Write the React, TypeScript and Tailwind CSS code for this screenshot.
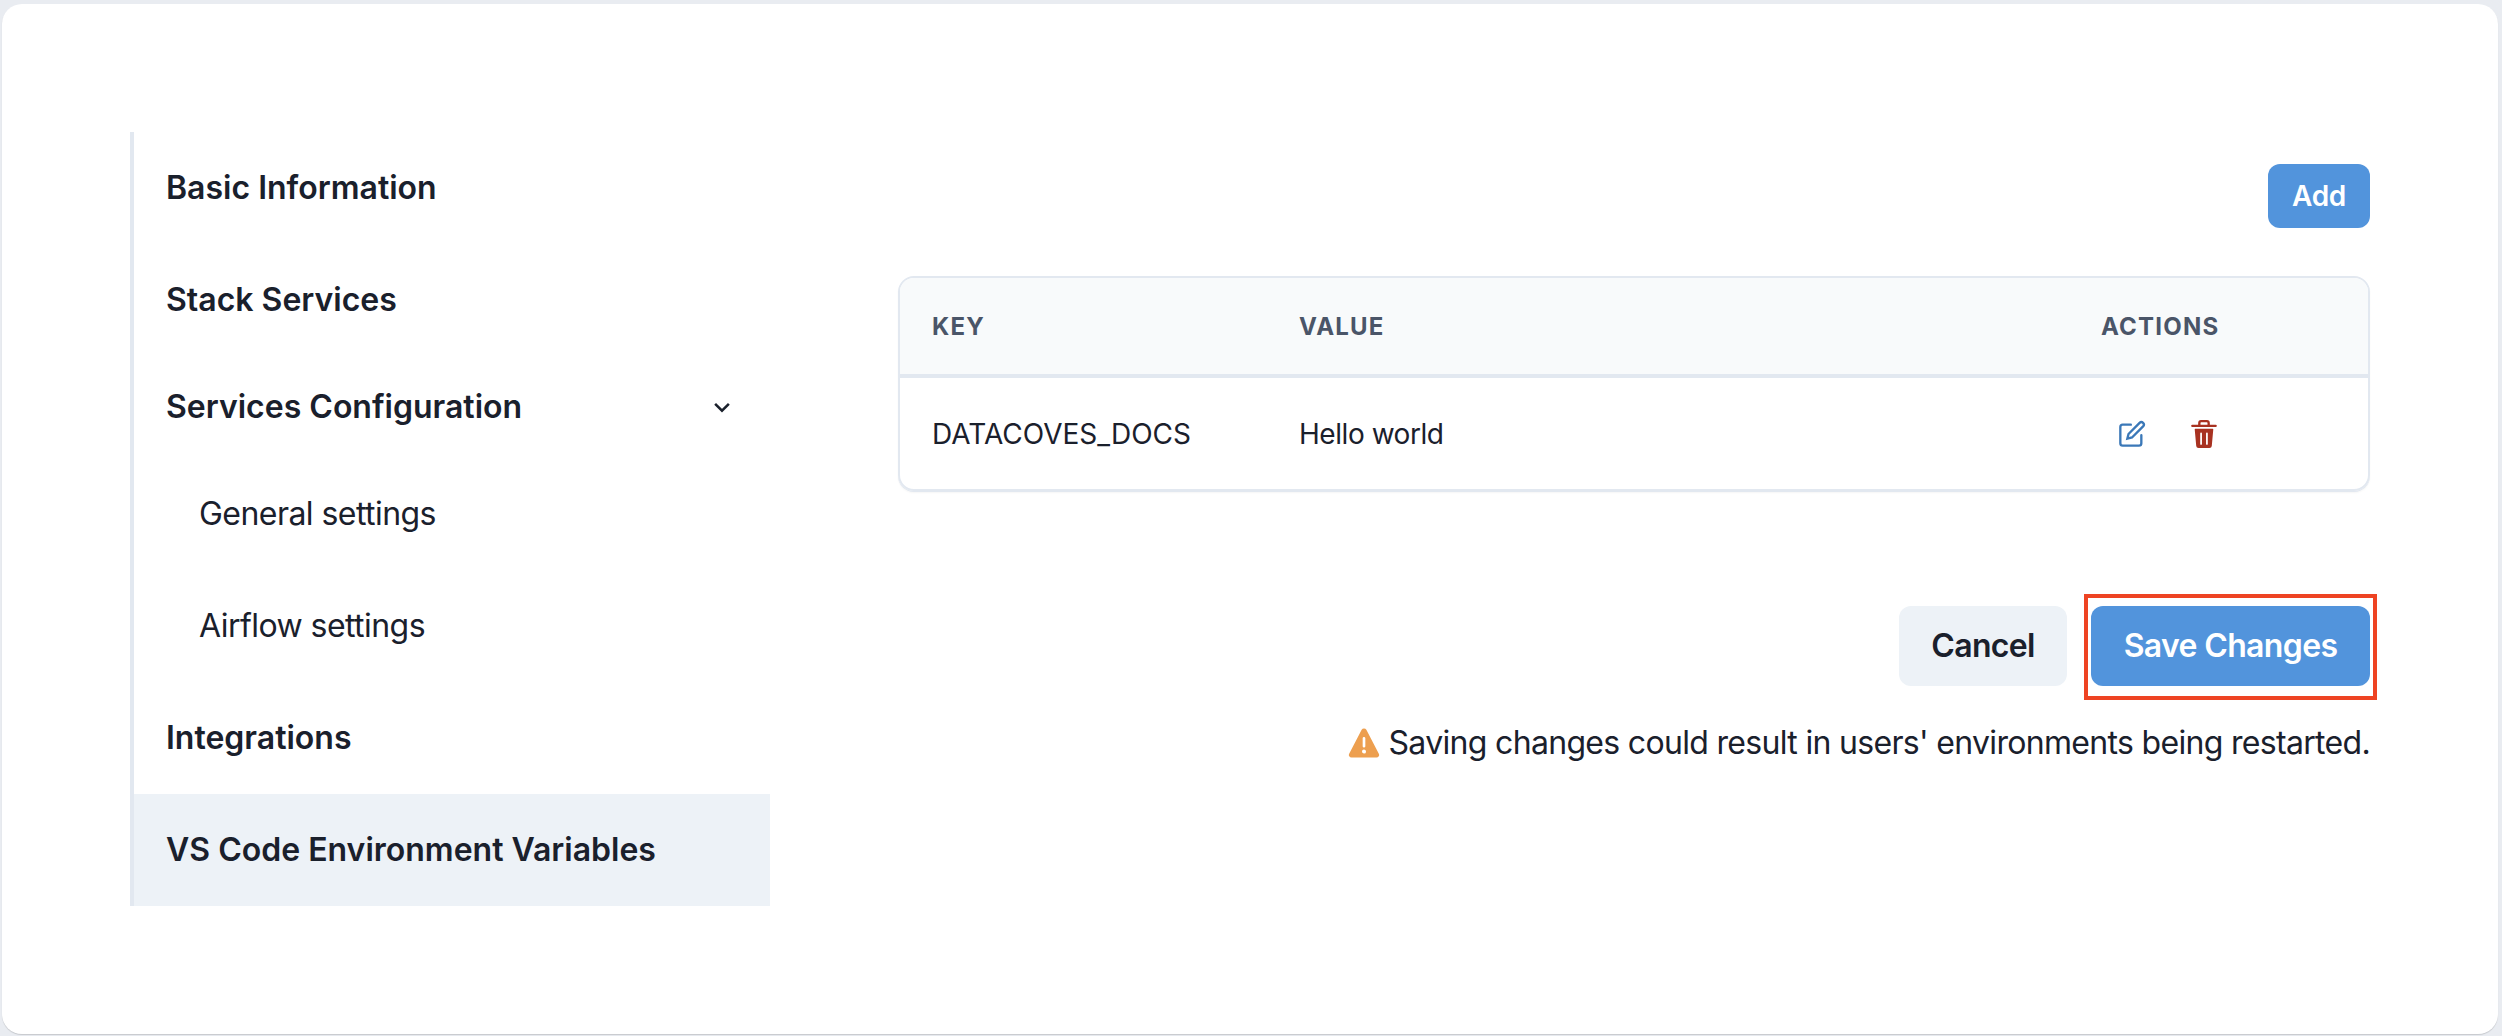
const font = { fontFamily: "Inter, 'Liberation Sans', sans-serif" };

function NavRow({ label, sub, active, chevron, short }: { label: string; sub?: boolean; active?: boolean; chevron?: boolean; short?: boolean }) {
  return (
    <div
      className={`flex items-center text-[#1a202c] text-[32px] ${short ? "h-[102px]" : "h-[112px]"} ${sub ? "pl-[65px] font-normal tracking-[-0.55px]" : "pl-[32px] font-semibold"} ${active ? "bg-[#edf2f7]" : ""} ${chevron ? "justify-between pr-[33px]" : ""}`}
    >
      <span>{label}</span>
      {chevron && (
        <svg width="30" height="30" viewBox="0 0 24 24" fill="none" stroke="currentColor" strokeWidth="2">
          <path d="M6.5 9.5L12 15l5.5-5.5" />
        </svg>
      )}
    </div>
  );
}

export default function App() {
  return (
    <div style={font} className="w-[2502px] h-[1036px] bg-[#e9ecf1] pt-[4px] pl-[2px] pr-[4px] pb-[2px] overflow-hidden">
      <div className="w-full h-full bg-white rounded-[20px] pl-[128px] pt-[128px] flex shadow-[0_1px_1px_rgba(0,0,0,0.15)]">
        <nav className="w-[640px] h-[774px] border-l-[4px] border-[#e2e8f0] flex flex-col">
          <NavRow label="Basic Information" />
          <NavRow label="Stack Services" />
          <NavRow label="Services Configuration" chevron short />
          <NavRow label="General settings" sub />
          <NavRow label="Airflow settings" sub />
          <NavRow label="Integrations" />
          <NavRow label="VS Code Environment Variables" active />
        </nav>
        <main className="ml-[128px] w-[1472px] pt-[32px]">
          <div className="flex justify-end">
            <button className="w-[102px] h-[64px] rounded-[12px] bg-[#5294dc] text-white text-[28px] font-semibold tracking-[-0.3px]">Add</button>
          </div>
          <div className="mt-[48px] h-[215px] border-2 border-[#e2e8f0] rounded-[16px] shadow-[0_1px_0_#e2e8f0,0_2px_2px_rgba(0,0,0,0.04)] overflow-hidden">
            <div className="h-[100px] pt-[2px] bg-[#f8fafb] border-b-[4px] border-[#e2e8f0] flex items-center text-[24px] font-bold tracking-[0.05em] text-[#4a5568]">
              <span className="ml-[32px] w-[367px]">KEY</span>
              <span className="flex-1">VALUE</span>
              <span className="w-[267px]">ACTIONS</span>
            </div>
            <div className="h-[109px] pt-[2px] flex items-center text-[28px] text-[#1a202c]">
              <span className="ml-[32px] w-[367px]">DATACOVES_DOCS</span>
              <span className="flex-1 tracking-[-0.45px]">Hello world</span>
              <div className="w-[267px] flex items-center gap-[44px] pl-[17px]">
                <svg className="text-[#3b78b8]" width="28" height="28" viewBox="0 0 24 24" fill="none" stroke="currentColor" strokeWidth="2" strokeLinecap="round">
                  <path d="M11 4H4a2 2 0 0 0-2 2v14a2 2 0 0 0 2 2h14a2 2 0 0 0 2-2v-7" />
                  <path d="M18.5 2.5a2.121 2.121 0 0 1 3 3L12 15l-4 1 1-4 9.5-9.5z" />
                </svg>
                <svg className="text-[#a83221]" width="28" height="28" viewBox="0 0 24 24" fill="currentColor">
                  <path d="M19.452 7.5H4.547a.5.5 0 00-.5.545l1.287 14.136A2 2 0 007.326 24h9.347a2 2 0 001.992-1.819L19.95 8.045a.5.5 0 00-.129-.382.5.5 0 00-.369-.163zm-9.2 13a.75.75 0 01-1.5 0v-9a.75.75 0 011.5 0zm5 0a.75.75 0 01-1.5 0v-9a.75.75 0 011.5 0zM22 4h-4.75a.25.25 0 01-.25-.25V2.5A2.5 2.5 0 0014.5 0h-5A2.5 2.5 0 007 2.5v1.25a.25.25 0 01-.25.25H2a1 1 0 000 2h20a1 1 0 000-2zM9 3.75V2.5a.5.5 0 01.5-.5h5a.5.5 0 01.5.5v1.25a.25.25 0 01-.25.25h-5.5A.25.25 0 019 3.75z" />
                </svg>
              </div>
            </div>
          </div>
          <div className="mt-[115px] flex justify-end gap-[24px]">
            <button className="w-[168px] h-[80px] rounded-[12px] bg-[#edf2f7] text-[#1a202c] text-[32px] font-semibold tracking-[-0.7px]">Cancel</button>
            <div className="relative">
              <button className="w-[279px] h-[80px] rounded-[12px] bg-[#5294dc] text-white text-[32px] font-semibold tracking-[-0.65px]">Save Changes</button>
              <div className="absolute left-[-7px] right-[-7px] top-[-12px] bottom-[-14px] border-[4px] border-[#ee4323]" />
            </div>
          </div>
          <div className="mt-[38px] flex justify-end items-center gap-[9px] text-[32px] leading-[38px] text-[#1a202c]">
            <svg className="text-[#ed9f4f]" width="32" height="32" viewBox="0 0 24 24" fill="currentColor">
              <path d="M23.119,20,13.772,2.15h0a2,2,0,0,0-3.543,0L.881,20a2,2,0,0,0,1.772,2.928H21.347A2,2,0,0,0,23.119,20ZM11,8.423a1,1,0,0,1,2,0v6a1,1,0,1,1-2,0Zm1.05,11.51h-.028a1.528,1.528,0,0,1-1.522-1.47,1.476,1.476,0,0,1,1.448-1.53h.028A1.527,1.527,0,0,1,13.5,18.4,1.475,1.475,0,0,1,12.05,19.933Z" />
            </svg>
            <span className="tracking-[-0.68px]">Saving changes could result in users' environments being restarted.</span>
          </div>
        </main>
      </div>
    </div>
  );
}
